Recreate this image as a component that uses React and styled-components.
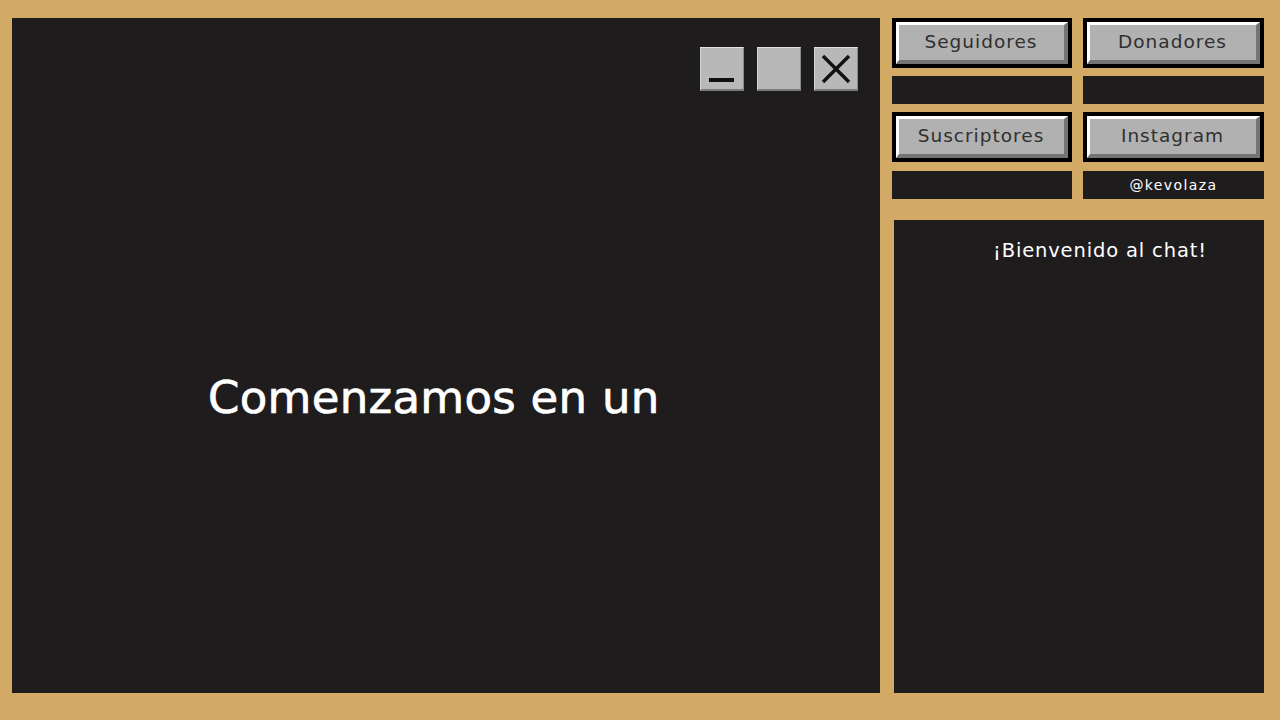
import React from "react";
import styled, { createGlobalStyle } from "styled-components";

const GlobalStyle = createGlobalStyle`
  html, body {
    margin: 0;
    padding: 0;
    background: #d2aa66;
    overflow: hidden;
  }
  * {
    box-sizing: border-box;
  }
`;

const Page = styled.div`
  width: 1280px;
  height: 720px;
  padding: 18px 16px 27px 12px;
  display: grid;
  grid-template-columns: 868px 372px;
  column-gap: 12px;
  font-family: "DejaVu Sans", sans-serif;
`;

const Screen = styled.main`
  background: #1f1c1d;
  padding: 29px 22px 0 0;
  display: flex;
  flex-direction: column;
`;

const WindowBar = styled.div`
  display: flex;
  justify-content: flex-end;
  gap: 13px;
`;

const WindowButton = styled.div`
  width: 44px;
  height: 44px;
  background: #b8b8b8;
  border-top: 1px solid #e2e2e2;
  border-left: 1px solid #d2d2d2;
  border-bottom: 2px solid #7b7b7b;
  border-right: 1px solid #8a8a8a;
  display: flex;
  align-items: center;
  justify-content: center;
`;

const Countdown = styled.h1`
  margin: 280px 0 0 196px;
  font-size: 45px;
  line-height: 54px;
  font-weight: 400;
  letter-spacing: 0.3px;
  color: #fff;
  -webkit-text-stroke: 0.7px #fff;
  white-space: nowrap;
`;

const Sidebar = styled.aside`
  display: flex;
  flex-direction: column;
`;

const Stats = styled.section`
  display: grid;
  grid-template-columns: 180px 181px;
  column-gap: 11px;
`;

const StatColumn = styled.div`
  display: flex;
  flex-direction: column;
  gap: 8px;
`;

const FrameButton = styled.div`
  height: 50px;
  background: #000;
  padding: 4px;
  display: flex;
`;

const Bevel = styled.div`
  flex: 1;
  background: #b1b1b1;
  border-top: 3px solid #fff;
  border-left: 3px solid #fff;
  border-bottom: 4px solid #747474;
  border-right: 4px solid #747474;
  padding: 0 1px 2px 0;
  display: flex;
  align-items: center;
  justify-content: center;
  font-size: 18.5px;
  letter-spacing: 1px;
  color: #2f2f2f;
`;

const ValueBox = styled.div`
  height: 28px;
  margin-top: ${(props) => (props.$lower ? "1px" : "0")};
  background: #1f1c1d;
  color: #fff;
  font-size: 14px;
  letter-spacing: 1.4px;
  display: flex;
  align-items: center;
  justify-content: center;
`;

const Chat = styled.section`
  flex: 1;
  margin: 21px 0 0 2px;
  background: #1f1c1d;
  color: #fff;
  padding: 17px 0 0 99px;
  font-size: 19.5px;
  line-height: 28px;
  letter-spacing: 0.85px;
`;

const columns = [
  [
    { label: "Seguidores", value: "" },
    { label: "Suscriptores", value: "", lower: true },
  ],
  [
    { label: "Donadores", value: "" },
    { label: "Instagram", value: "@kevolaza", lower: true },
  ],
];

export default function App() {
  return (
    <>
      <GlobalStyle />
      <Page>
        <Screen>
          <WindowBar>
            <WindowButton>
              <svg width="30" height="30" viewBox="0 0 30 30">
                <rect x="2" y="24" width="25" height="4" fill="#111" />
              </svg>
            </WindowButton>
            <WindowButton />
            <WindowButton>
              <svg width="30" height="30" viewBox="0 0 30 30">
                <path d="M2 2 L28 28 M28 2 L2 28" stroke="#111" strokeWidth="3.4" fill="none" />
              </svg>
            </WindowButton>
          </WindowBar>
          <Countdown>Comenzamos en un</Countdown>
        </Screen>
        <Sidebar>
          <Stats>
            {columns.map((column) => (
              <StatColumn key={column[0].label}>
                {column.map((stat) => (
                  <React.Fragment key={stat.label}>
                    <FrameButton>
                      <Bevel>{stat.label}</Bevel>
                    </FrameButton>
                    <ValueBox $lower={stat.lower}>{stat.value}</ValueBox>
                  </React.Fragment>
                ))}
              </StatColumn>
            ))}
          </Stats>
          <Chat>¡Bienvenido al chat!</Chat>
        </Sidebar>
      </Page>
    </>
  );
}
